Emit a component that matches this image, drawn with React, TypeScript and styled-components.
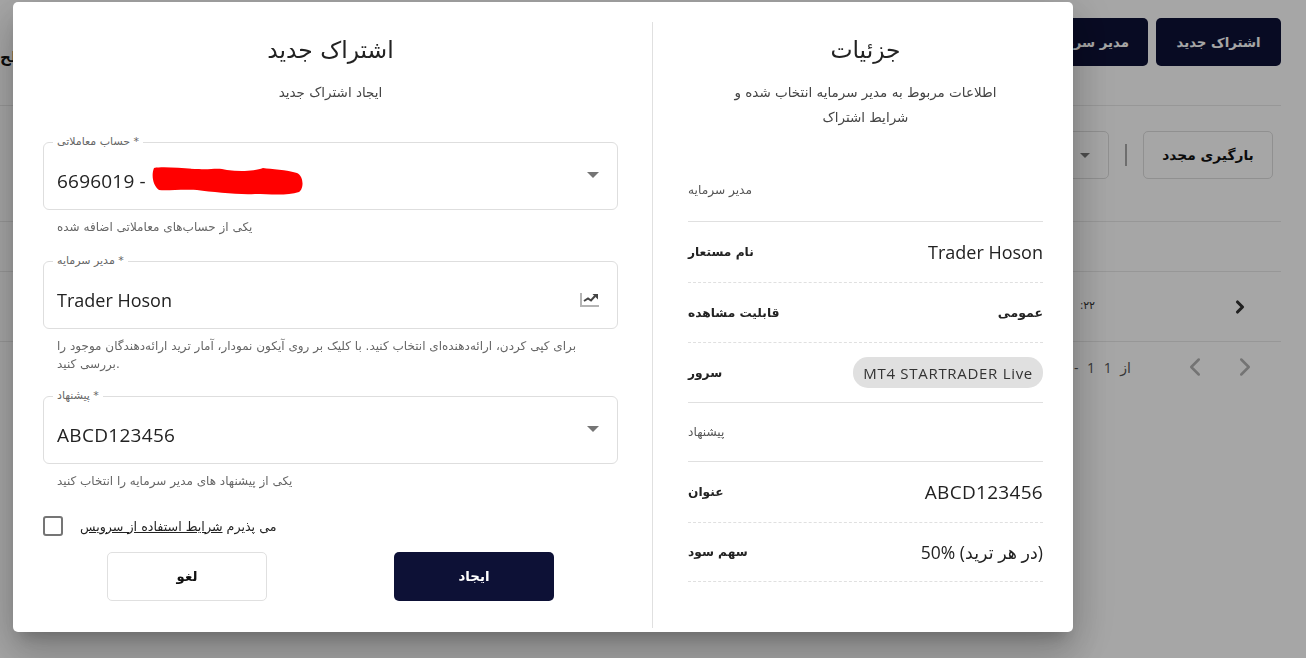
import React from 'react';
import styled, { createGlobalStyle } from 'styled-components';
import { ChevronLeft, ChevronRight } from 'lucide-react';

const Global = createGlobalStyle`
  html, body { margin: 0; padding: 0; background: #fff; overflow: hidden; }
  * { box-sizing: border-box; }
  body { font-family: "Open Sans", "DejaVu Sans", sans-serif; color: #222; }
`;

const Page = styled.div`
  width: 1306px;
  height: 658px;
  padding: 18px 25px 0 0;
  overflow: hidden;
  background: #fff;
`;
const TopBar = styled.div`
  display: flex;
  justify-content: space-between;
  align-items: center;
  height: 48px;
`;
const PageTitle = styled.div`
  font-size: 15px;
  font-weight: 700;
  color: #111;
  margin-top: 28px;
`;
const TopActions = styled.div`
  display: flex;
  gap: 8px;
`;
const DarkButton = styled.button<{ $w: number }>`
  width: ${p => p.$w}px;
  height: 48px;
  border: 0;
  border-radius: 5px;
  background: #0d1136;
  color: #fff;
  font: 700 13.3px "DejaVu Sans", sans-serif;
`;
const Rule = styled.div<{ $top?: number }>`
  height: 1px;
  margin-top: ${p => p.$top ?? 0}px;
  background: #e8e8e8;
`;
const Tools = styled.div`
  display: flex;
  justify-content: flex-end;
  align-items: center;
  gap: 16px;
  height: 115px;
  padding: 25px 8px 42px 0;
`;
const SelectGhost = styled.div`
  width: 300px;
  height: 48px;
  display: flex;
  justify-content: flex-end;
  align-items: center;
  padding-right: 18px;
  border: 1px solid #ddd;
  border-radius: 5px;
`;
const Caret = styled.span`
  width: 0;
  height: 0;
  border-left: 5px solid transparent;
  border-right: 5px solid transparent;
  border-top: 5px solid #777;
`;
const Bar = styled.span`
  width: 2px;
  height: 22px;
  background: #aaa;
`;
const GhostButton = styled.button`
  width: 130px;
  height: 48px;
  background: transparent;
  border: 1px solid #ddd;
  border-radius: 5px;
  color: #111;
  font: 700 13.8px "DejaVu Sans", sans-serif;
`;
const HeadRow = styled.div`
  height: 49px;
`;
const BodyRow = styled.div`
  height: 69px;
  display: flex;
  justify-content: flex-end;
  align-items: center;
  gap: 135px;
  padding-right: 31px;
  color: #333;
  font-size: 11px;
`;
const RowTime = styled.span`
  direction: rtl;
  margin-top: -5px;
`;
const Pager = styled.div`
  display: flex;
  justify-content: flex-end;
  align-items: center;
  gap: 20px;
  height: 50px;
  padding-right: 21px;
  color: #b2b2b2;
`;
const PagerText = styled.span`
  font: 14px "Open Sans", "DejaVu Sans", sans-serif;
  word-spacing: 5px;
  color: #555;
  margin-right: 29px;
`;

const Overlay = styled.div`
  position: fixed;
  inset: 0;
  padding: 2px 0 0 13px;
  background: rgba(0, 0, 0, 0.35);
`;
const Dialog = styled.div`
  width: 1060px;
  height: 630px;
  display: flex;
  padding: 20px 0 4px;
  background: #fff;
  border-radius: 5px;
  box-shadow: 0 11px 15px -7px rgba(0,0,0,.2), 0 24px 38px 3px rgba(0,0,0,.14), 0 9px 46px 8px rgba(0,0,0,.12);
`;
const FormPane = styled.div`
  width: 640px;
  padding: 0 34px 0 30px;
  border-right: 1px solid #e0e0e0;
`;
const DetailPane = styled.div`
  width: 420px;
  padding: 0 30px 0 35px;
`;
const Title = styled.h2`
  margin: 0;
  height: 58px;
  padding-top: 9px;
  text-align: center;
  font: 400 23.4px/38px "DejaVu Sans", sans-serif;
  color: #222;
`;
const Subtitle = styled.p`
  margin: 0;
  text-align: center;
  font: 400 13.5px/25px "DejaVu Sans", sans-serif;
  color: #444;
`;
const FormSubtitle = styled(Subtitle)`
  height: 62px;
`;
const Field = styled.div`
  position: relative;
  height: 68px;
  display: flex;
  justify-content: space-between;
  align-items: center;
  padding: 0 18px 0 13px;
  border: 1px solid #dedede;
  border-radius: 6px;
`;
const FloatLabel = styled.label`
  position: absolute;
  top: -8px;
  left: 9px;
  padding: 0 4px;
  background: #fff;
  font: 400 11px/14px "DejaVu Sans", sans-serif;
  color: #666;
`;
const Value = styled.div<{ $size?: number; $track?: number }>`
  display: flex;
  align-items: center;
  margin-top: 9px;
  font-size: ${p => p.$size ?? 18}px;
  letter-spacing: ${p => p.$track ?? 0}px;
  color: #222;
`;
const Redaction = styled.svg`
  display: block;
  width: 152px;
  height: 28px;
  margin-left: 5px;
`;
const FieldCaret = styled.span`
  width: 0;
  height: 0;
  border-left: 6px solid transparent;
  border-right: 6px solid transparent;
  border-top: 6px solid #757575;
  margin-top: -2px;
`;
const ChartIcon = styled.svg`
  display: block;
  width: 19px;
  height: 14px;
  margin: 10px 0 0;
`;
const Helper = styled.p<{ $h: number }>`
  margin: 0 0 0 14px;
  height: ${p => p.$h}px;
  padding-top: 8px;
  max-width: 535px;
  font: 400 12px/18px "DejaVu Sans", sans-serif;
  color: #666;
`;
const Terms = styled.div`
  display: flex;
  align-items: center;
  gap: 17px;
  height: 20px;
`;
const Check = styled.span`
  width: 20px;
  height: 20px;
  border: 2px solid #757575;
  border-radius: 3px;
`;
const TermsText = styled.span`
  font: 400 12.7px "DejaVu Sans", sans-serif;
  color: #222;
`;
const TermsLink = styled.span`
  text-decoration: underline;
`;
const FormButtons = styled.div`
  display: flex;
  justify-content: space-between;
  margin-top: 16px;
  padding: 0 64px;
`;
const Submit = styled.button`
  width: 160px;
  height: 49px;
  border: 0;
  border-radius: 5px;
  background: #0d1136;
  color: #fff;
  font: 700 13.3px "DejaVu Sans", sans-serif;
`;
const Cancel = styled(Submit)`
  border: 1px solid #e0e0e0;
  background: #fff;
  color: #111;
`;
const DetailHead = styled.div`
  height: 140px;
`;
const Row = styled.div<{ $solid?: boolean; $section?: boolean; $lift?: boolean; $h?: number }>`
  display: flex;
  justify-content: space-between;
  align-items: center;
  height: ${p => p.$h ?? 60}px;
  padding-bottom: ${p => (p.$lift ? 4 : 0)}px;
  border-bottom: 1px ${p => (p.$solid ? 'solid #e0e0e0' : 'dashed #e0e0e0')};
  font: ${p => (p.$section ? '400' : '700')} 12.2px "DejaVu Sans", sans-serif;
  color: ${p => (p.$section ? '#555' : '#222')};
`;
const RowValue = styled.span<{ $rtl?: boolean; $size?: number; $track?: number }>`
  font: ${p => (p.$rtl ? '700 12.5px' : `400 ${p.$size ?? 18}px`)} "Open Sans", "DejaVu Sans", sans-serif;
  letter-spacing: ${p => p.$track ?? 0}px;
  color: #222;
`;
const Chip = styled.span`
  height: 31px;
  display: flex;
  align-items: center;
  padding: 0 10px;
  border-radius: 15px;
  background: #e0e0e0;
  font: 400 15px "Open Sans", sans-serif;
  letter-spacing: 0.7px;
  color: #333;
`;

export default function App() {
  return (
    <>
      <Global />
      <Page>
        <TopBar>
          <PageTitle>مدیریت اشتراک‌ها در سطح</PageTitle>
          <TopActions>
            <DarkButton $w={154}>مدیر سرمایه جدید</DarkButton>
            <DarkButton $w={125}>اشتراک جدید</DarkButton>
          </TopActions>
        </TopBar>
        <Rule $top={39} />
        <Tools>
          <SelectGhost><Caret /></SelectGhost>
          <Bar />
          <GhostButton>بارگیری مجدد</GhostButton>
        </Tools>
        <Rule />
        <HeadRow />
        <Rule />
        <BodyRow>
          <RowTime>۲۲:</RowTime>
          <ChevronRight size={20} strokeWidth={3.8} color="#333" />
        </BodyRow>
        <Rule />
        <Pager>
          <PagerText>1 - 1 1 از</PagerText>
          <ChevronLeft size={30} strokeWidth={2} />
          <ChevronRight size={30} strokeWidth={2} />
        </Pager>
      </Page>
      <Overlay>
        <Dialog>
          <FormPane>
            <Title>اشتراک جدید</Title>
            <FormSubtitle>ایجاد اشتراک جدید</FormSubtitle>
            <Field>
              <FloatLabel>حساب معاملاتی *</FloatLabel>
              <Value $size={19} $track={0.2}>
                6696019 -
                <Redaction viewBox="0 0 152 28">
                  <path
                    fill="#ff0000"
                    d="M3 1C14 -1 36 2 48 2C60 3 66 0 76 3C90 5 104 4 112 1C120 2 136 3 146 6C153 9 153 22 148 25C136 29 118 27 104 27C88 28 62 25 46 23C30 22 16 24 8 23C2 19 0 8 3 1Z"
                  />
                </Redaction>
              </Value>
              <FieldCaret />
            </Field>
            <Helper $h={51}>یکی از حساب‌های معاملاتی اضافه شده</Helper>
            <Field>
              <FloatLabel>مدیر سرمایه *</FloatLabel>
              <Value>Trader Hoson</Value>
              <ChartIcon viewBox="0 0 19 14">
                <path d="M1 0V13H19" fill="none" stroke="#b4b4b4" strokeWidth="2" />
                <path d="M4 8L8 5.5L11 7.5L15 3" fill="none" stroke="#444" strokeWidth="2" />
                <path d="M12.5 1H18V6.5Z" fill="#444" />
              </ChartIcon>
            </Field>
            <Helper $h={67}>برای کپی کردن، ارائه‌دهنده‌ای انتخاب کنید. با کلیک بر روی آیکون نمودار، آمار ترید ارائه‌دهندگان موجود را بررسی کنید.</Helper>
            <Field>
              <FloatLabel>پیشنهاد *</FloatLabel>
              <Value $size={19} $track={0.3}>ABCD123456</Value>
              <FieldCaret />
            </Field>
            <Helper $h={52}>یکی از پیشنهاد های مدیر سرمایه را انتخاب کنید</Helper>
            <Terms>
              <Check />
              <TermsText>می پذیرم <TermsLink>شرایط استفاده از سرویس</TermsLink></TermsText>
            </Terms>
            <FormButtons>
              <Cancel>لغو</Cancel>
              <Submit>ایجاد</Submit>
            </FormButtons>
          </FormPane>
          <DetailPane>
            <DetailHead>
              <Title>جزئیات</Title>
              <Subtitle>اطلاعات مربوط به مدیر سرمایه انتخاب شده و<br />شرایط اشتراک</Subtitle>
            </DetailHead>
            <Row $solid $section $lift>مدیر سرمایه</Row>
            <Row $h={61}>نام مستعار<RowValue>Trader Hoson</RowValue></Row>
            <Row>قابلیت مشاهده<RowValue $rtl>عمومی</RowValue></Row>
            <Row $solid>سرور<Chip>MT4 STARTRADER Live</Chip></Row>
            <Row $solid $section $h={59}>پیشنهاد</Row>
            <Row $h={61}>عنوان<RowValue $size={19} $track={0.3}>ABCD123456</RowValue></Row>
            <Row $h={59}>سهم سود<RowValue $size={17.5}>50% (در هر ترید)</RowValue></Row>
          </DetailPane>
        </Dialog>
      </Overlay>
    </>
  );
}
